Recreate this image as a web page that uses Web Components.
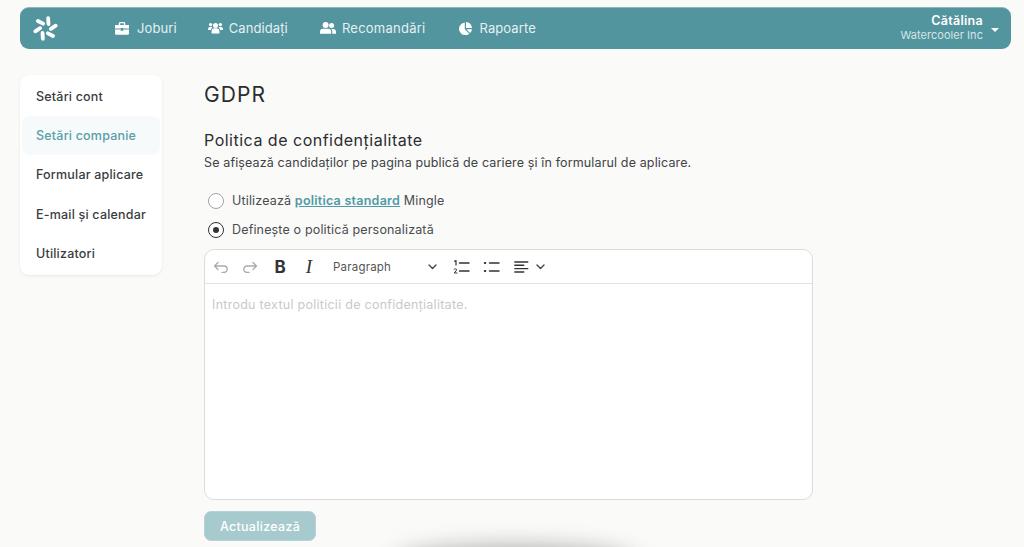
<!DOCTYPE html>
<html lang="ro">
<head>
<meta charset="utf-8">
<title>GDPR</title>
<style>
  html, body { margin: 0; height: 100%; overflow: hidden; }
  body { background: #fafaf9; font-family: Inter, "Open Sans", sans-serif; color: #2f3133; }
</style>
</head>
<body>
<app-shell>
  <top-bar slot="top"></top-bar>
  <side-menu slot="side"></side-menu>
  <gdpr-page slot="main"></gdpr-page>
</app-shell>

<script>
// small helper, every element has the same constructor otherwise
function shadow(el, html) {
  el.attachShadow({mode: 'open'}).innerHTML = html;
}

class AppShell extends HTMLElement {
  constructor() {
    super();
    shadow(this, `<style>
      :host { display: block; position: relative; height: 547px; overflow: hidden; padding: 7px 13px 0 20px; box-sizing: border-box; }
      .cols { display: flex; margin-top: 26px; }
      .side { flex: 0 0 142px; margin-right: 42px; }
      .main { flex: 0 0 609px; }
      /* blurred shape coming up from under the window edge */
      .glow { position: absolute; left: 395px; top: 549px; width: 240px; height: 30px; border-radius: 50%; background: #9a9a98; filter: blur(12px); }
    </style>
    <slot name="top"></slot>
    <div class="cols">
      <div class="side"><slot name="side"></slot></div>
      <div class="main"><slot name="main"></slot></div>
    </div>
    <div class="glow"></div>`);
  }
}

class TopBar extends HTMLElement {
  constructor() {
    super();
    // six blades, each leaning a little off the radius
    const blades = [21, 81, 141, 201, 261, 321].map(p =>
      `<rect x="-1.900" y="-4.800" width="3.800" height="9.600" rx="1.900" transform="translate(12.500 12.500) rotate(${p}) translate(0 -7.900) rotate(-24)"/>`).join('');
    shadow(this, `<style>
      :host { display: flex; align-items: center; height: 42px; box-sizing: border-box; background: #52959f; border-radius: 9px; border-top: 1px solid #8db7bd; color: #fff; padding: 0 12px 0 13px; font-size: 13px; }
      .logo { width: 25px; height: 25px; margin-right: 57px; flex: none; overflow: visible; }
      nav { display: flex; align-items: center; margin-top: -1px; }
      a { display: flex; align-items: center; color: #e6f0f1; letter-spacing: .1px; }
      a svg { display: block; fill: #fff; margin-right: 8px; }
      .user { margin-left: auto; display: flex; align-items: center; }
      .who { text-align: right; margin-right: 8px; margin-top: -2px; }
      .name { font-size: 12.5px; font-weight: 600; line-height: 15px; letter-spacing: .3px; }
      .co { font-size: 11px; line-height: 15px; color: #d5e5e7; letter-spacing: .05px; }
      .caret { width: 0; height: 0; border: 4px solid transparent; border-top: 4px solid #fff; border-bottom: 0; margin-top: 2px; }
    </style>
    <svg class="logo" viewBox="0 0 25 25" fill="#fff">${blades}</svg>
    <nav>
      <a style="margin-right:31px"><svg width="14" height="13" viewBox="0 0 14 13"><path d="M5 0h4a1.2 1.2 0 0 1 1.2 1.2V3H14v3.600H8.200V6H5.800v.6H0V3h3.800V1.200A1.200 1.200 0 0 1 5 0zm.1 1.300V3h3.800V1.300zM0 7.600h5.800v1.200h2.400V7.600H14v4a1.200 1.200 0 0 1-1.200 1.200H1.200A1.200 1.200 0 0 1 0 11.600z"/></svg>Joburi</a>
      <a style="margin-right:32px"><svg width="15" height="12" viewBox="0 0 15 12" style="margin-right:6px"><circle cx="7.500" cy="3.600" r="2.500"/><circle cx="2.600" cy="2.600" r="1.700"/><circle cx="12.400" cy="2.600" r="1.700"/><path d="M3.600 11.400V9.200a3 3 0 0 1 3-3h1.800a3 3 0 0 1 3 3v2.200zM0 8V7a2 2 0 0 1 2-2h1.400c.4 0 .7.1 1 .3A3.800 3.800 0 0 0 3 8zM15 8V7a2 2 0 0 0-2-2h-1.400c-.4 0-.7.1-1 .3A3.800 3.800 0 0 1 12 8z"/></svg>Candidați</a>
      <a style="margin-right:34px"><svg width="16" height="12" viewBox="0 0 16 12" style="margin-right:6px"><circle cx="5.600" cy="3" r="3"/><circle cx="11.600" cy="3.400" r="2.500"/><path d="M0 11.800V9.800a3 3 0 0 1 3-3h5.200a3 3 0 0 1 3 3v2zM12.300 11.800V9.600c0-1-.4-2-1-2.700h1.700a3 3 0 0 1 3 3v1.900z"/></svg><span style="letter-spacing:.25px">Recomandări</span></a>
      <a><svg width="13" height="13" viewBox="0 0 13 13" style="margin-right:7px"><path d="M5.800.6v6.600l4.600 4.500A6.300 6.300 0 1 1 5.800.6z"/><path d="M7 0a6.200 6.200 0 0 1 6 6H7z"/><path d="M7.300 7.200H13a6.300 6.300 0 0 1-1.800 3.800z"/></svg>Rapoarte</a>
    </nav>
    <div class="user">
      <div class="who"><div class="name">Cătălina</div><div class="co">Watercooler Inc</div></div>
      <div class="caret"></div>
    </div>`);
  }
}

class SideMenu extends HTMLElement {
  constructor() {
    super();
    const items = ['Setări cont', 'Setări companie', 'Formular aplicare', 'E-mail și calendar', 'Utilizatori'];
    const rows = items.map((t, i) => `<div class="row${i == 1 ? ' on' : ''}">${t}</div>`).join('');
    shadow(this, `<style>
      :host { display: block; background: #fff; border-radius: 9px; box-shadow: 0 1px 3px rgba(0,0,0,.08); padding: 2px; height: 200px; box-sizing: border-box; font-size: 12.5px; font-weight: 500; letter-spacing: .2px; color: #3a3c3e; }
      .row { height: 39.2px; display: flex; align-items: center; padding-left: 14px; border-radius: 8px; }
      .on { background: #f6fafb; color: #5a9ea8; }
    </style>${rows}`);
  }
}

class RadioOption extends HTMLElement {
  constructor() {
    super();
    const on = this.hasAttribute('checked');
    shadow(this, `<style>
      :host { display: flex; align-items: center; height: 29px; font-size: 12.5px; color: #4a4c4e; letter-spacing: .16px; padding-left: 4px; }
      .dot { width: 16px; height: 16px; box-sizing: border-box; border-radius: 50%; border: 1.5px solid ${on ? '#333' : '#a3a3a3'}; margin-right: 8px; display: flex; align-items: center; justify-content: center; background: #fff; flex: none; }
      .dot i { display: ${on ? 'block' : 'none'}; width: 6px; height: 6px; border-radius: 50%; background: #333; }
      ::slotted(a) { color: #4f9aa5; font-weight: 600; text-decoration: underline; letter-spacing: .25px; }
    </style><span class="dot"><i></i></span><span><slot></slot></span>`);
  }
}

class RichEditor extends HTMLElement {
  constructor() {
    super();
    shadow(this, `<style>
      :host { display: block; height: 252px; box-sizing: border-box; background: #fff; border: 1px solid #dcdcdc; border-radius: 10px; overflow: hidden; }
      .tools { display: flex; align-items: center; height: 34px; border-bottom: 1px solid #e2e2e2; box-sizing: border-box; font-size: 11.5px; color: #555; padding-left: 8px; }
      .tools svg { display: block; flex: none; fill: none; stroke-linecap: round; stroke-linejoin: round; }
      .b { font: 700 17px Inter, sans-serif; color: #333; width: 14px; margin-left: 15px; text-align: center; }
      .i { font: italic 400 19px "Liberation Serif", serif; color: #333; width: 12px; margin-left: 16px; text-align: center; }
      .para { letter-spacing: .2px; width: 95px; margin-left: 18px; }
      .body { padding: 13px 7px; font-size: 12.5px; letter-spacing: .27px; color: #c9c9c9; }
    </style>
    <div class="tools">
      <svg width="16" height="12" viewBox="0 0 16 12" stroke="#aaa" stroke-width="1.300"><path d="M5 1.500 1.500 5 5 8.500M1.500 5H11a3.200 3.200 0 0 1 0 6.400H9"/></svg>
      <svg width="16" height="12" viewBox="0 0 16 12" stroke="#aaa" stroke-width="1.300" style="margin-left:13px"><path d="M11 1.500 14.500 5 11 8.500M14.500 5H5a3.200 3.200 0 0 0 0 6.400h2"/></svg>
      <span class="b">B</span>
      <span class="i">I</span>
      <span class="para">Paragraph</span>
      <svg width="9" height="6" viewBox="0 0 9 6" stroke="#444" stroke-width="1.400"><path d="M1 1l3.500 3.500L8 1"/></svg>
      <svg width="17" height="14" viewBox="0 0 17 14" stroke="#333" stroke-width="1.500" style="margin-left:16px"><path d="M6.500 3h9.500M6.500 11h9.500"/><path d="M1.500 1.200 3 .6v4.400" stroke-width="1.200"/><path d="M1 9.500c1-1.200 3-.8 2.600.6L1.200 13h2.800" stroke-width="1"/></svg>
      <svg width="17" height="12" viewBox="0 0 17 12" stroke="#333" stroke-width="2" style="margin-left:13px"><path d="M6.500 2h9.500M6.500 10h9.500" stroke-width="1.500"/><path d="M1.800 2h.5M1.800 10h.5"/></svg>
      <svg width="15" height="12" viewBox="0 0 15 12" stroke="#333" stroke-width="1.400" style="margin-left:14px"><path d="M.8 1h13M.8 4.300h9M.8 7.600h13M.8 11h9"/></svg>
      <svg width="9" height="6" viewBox="0 0 9 6" stroke="#444" stroke-width="1.400" style="margin-left:7px"><path d="M1 1l3.500 3.500L8 1"/></svg>
    </div>
    <div class="body"><slot></slot></div>`);
  }
}

class GdprPage extends HTMLElement {
  constructor() {
    super();
    shadow(this, `<style>
      :host { display: block; }
      h1 { font-size: 21px; font-weight: 400; letter-spacing: 1.1px; line-height: 26px; margin: 0; padding-top: 7px; color: #2b2d2f; }
      h2 { font-size: 16px; font-weight: 400; letter-spacing: .5px; line-height: 20px; margin: 22px 0 5px; color: #2b2d2f; }
      p { font-size: 12.5px; line-height: 16px; letter-spacing: .135px; margin: 0 0 15px; color: #414345; }
      rich-editor { margin-top: 5px; height: 251px; }
      button { display: block; margin-top: 11px; width: 112px; height: 30px; border: 1px solid #b5d3d7; border-radius: 7px; background: #a6cace; color: #fff; font: 500 12.5px Inter, sans-serif; letter-spacing: .3px; padding: 0; }
    </style>
    <h1>GDPR</h1>
    <h2>Politica de confidențialitate</h2>
    <p>Se afișează candidaților pe pagina publică de cariere și în formularul de aplicare.</p>
    <radio-option>Utilizează <a>politica standard</a> Mingle</radio-option>
    <radio-option checked>Definește o politică personalizată</radio-option>
    <rich-editor>Introdu textul politicii de confidențialitate.</rich-editor>
    <button>Actualizează</button>`);
  }
}

customElements.define('radio-option', RadioOption);
customElements.define('rich-editor', RichEditor);
customElements.define('top-bar', TopBar);
customElements.define('side-menu', SideMenu);
customElements.define('gdpr-page', GdprPage);
customElements.define('app-shell', AppShell);
</script>
</body>
</html>
